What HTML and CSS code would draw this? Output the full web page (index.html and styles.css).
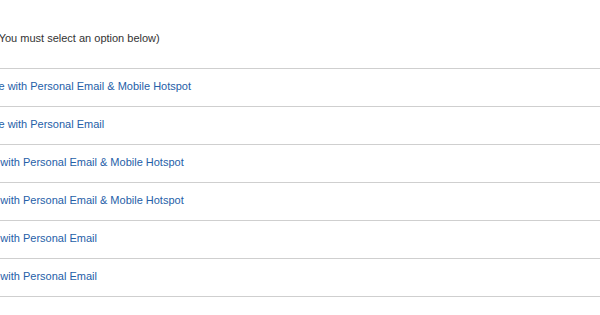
FILE: index.html
```html
<!DOCTYPE html>
<html lang="en">
<head>
    <meta charset="UTF-8">
    <title>Choose Your Device</title>
    <link rel="stylesheet" href="styles.css">
</head>
<body>
    <div class="panel">
        <p class="note">(You must select an option below)</p>
        <ul class="options">
            <li><a href="#">BlackBerry Curve with Personal Email &amp; Mobile Hotspot</a></li>
            <li><a href="#">BlackBerry Curve with Personal Email</a></li>
            <li><a href="#">BlackBerry Bold with Personal Email &amp; Mobile Hotspot</a></li>
            <li><a href="#">BlackBerry Bold with Personal Email &amp; Mobile Hotspot</a></li>
            <li><a href="#">BlackBerry Bold with Personal Email</a></li>
            <li><a href="#">BlackBerry Bold with Personal Email</a></li>
        </ul>
    </div>
</body>
</html>
```

FILE: styles.css
```css
html, body {
    margin: 0;
    padding: 0;
    background-color: #fff;
    overflow: hidden;
}
body {
    font-family: "Liberation Sans", Arial, sans-serif;
    font-size: 11px;
    color: #333;
}
.panel {
    margin-left: -81px;
}
.note {
    margin: 0;
    height: 68px;
    box-sizing: border-box;
    padding: 31px 0 0 76px;
    line-height: 14px;
}
.options {
    list-style: none;
    margin: 0;
    padding: 0;
}
.options li {
    border-top: 1px solid #cfcfcf;
    height: 37px;
    line-height: 35px;
}
.options li:last-child {
    border-bottom: 1px solid #cfcfcf;
}
.options a {
    color: #2560a8;
    text-decoration: none;
}
```
